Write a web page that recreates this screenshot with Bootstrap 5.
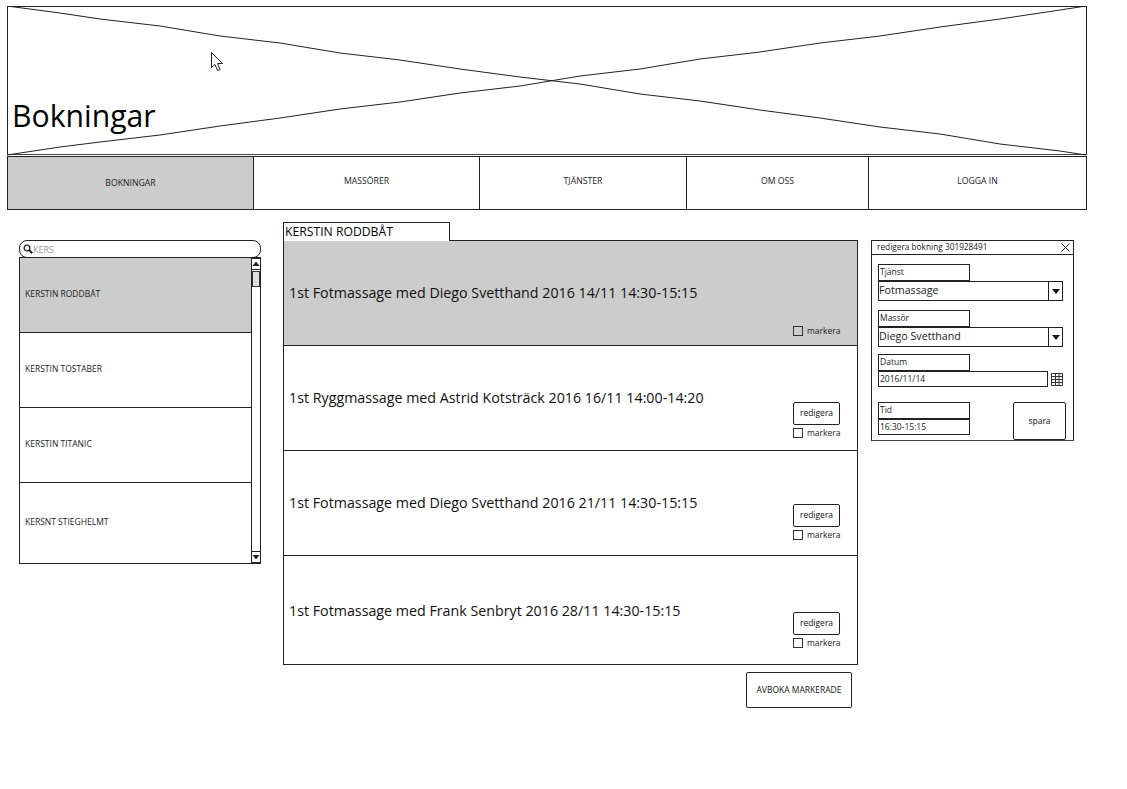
<!DOCTYPE html>
<html lang="sv">
<head>
<meta charset="utf-8">
<title>Bokningar</title>
<link href="https://cdn.jsdelivr.net/npm/bootstrap@5.3.0/dist/css/bootstrap.min.css" rel="stylesheet">
<style>
body{margin:0;background:#fff;color:#111;font-family:"Open Sans","Noto Sans",sans-serif;font-size:9px;line-height:1.2}
.wf-page{width:1127px;height:789px;padding:6px 0 0 7px;position:relative;overflow:hidden}
.wf-hero{width:1080px;height:149px;border:1px solid #222;border-bottom-color:#444;position:relative;display:flex;align-items:flex-end;padding:0 0 20px 4px}
.wf-hero svg{position:absolute;left:-1px;top:-1px}
.wf-hero h1{position:relative;margin:0;font-size:30.2px;font-weight:400;line-height:1.2;color:#000}
.wf-nav{width:1080px;height:54px;margin-top:1px;border:1px solid #222;display:flex}
.wf-nav a{display:flex;align-items:center;justify-content:center;color:#222;text-decoration:none;font-size:8.7px;border-left:1px solid #222;padding:0 0 3px}
.wf-nav a:first-child{border-left:0;background:#ccc;padding:1px 0 0}
.wf-n1{width:245px}.wf-n2{width:226px}.wf-n3{width:207px}.wf-n4{width:182px}.wf-n5{width:218px}
.wf-main{display:flex;align-items:flex-start;margin-top:12px}
.wf-left{width:242px;margin:18px 22px 0 12px}
.wf-search{height:18px;border:1px solid #222;border-radius:8px;display:flex;align-items:center;padding:0 0 0 3px;gap:0;background:#fff}
.wf-search svg{flex:none}
.wf-search input{border:0;padding:0;background:transparent;font-size:9px;color:#999;border-radius:0;height:14px;min-height:0;box-shadow:none}
.wf-people{height:307px;border:1px solid #222;margin-top:-1px;display:flex;background:#fff}
.wf-people .list-group{flex:1;border-radius:0;border-right:1px solid #222}
.wf-people .list-group-item{height:75px;display:flex;align-items:center;border:0;border-bottom:1px solid #222;border-radius:0;padding:0 0 1px 5px;font-size:8.5px;color:#222;background:transparent}
.wf-people .list-group-item:last-child{height:auto;flex:1;border-bottom:0;padding-bottom:1px}
.wf-people .list-group-item.active{background:#ccc;color:#222;padding-bottom:2px}
.wf-scroll{width:8px;display:flex;flex-direction:column;position:relative}
.wf-scroll-btn{height:12px;border:1px solid #222;display:flex;align-items:center;justify-content:center;margin:0 -1px 0 -1px}
.wf-scroll-thumb{height:16px;margin:1px 0 0 0;border:1px solid #333;background:#ddd}
.wf-mid{width:575px}
.wf-tab{width:167px;height:21px;border:1px solid #222;background:#fff;font-size:12.2px;padding:1px 0 0 1px;line-height:16px;color:#000;position:relative;margin-bottom:-3px;z-index:1}
.wf-rows{border:1px solid #222;border-radius:0;margin-top:0}
.wf-rows .list-group-item{display:flex;justify-content:space-between;border:0;border-bottom:1px solid #222;border-radius:0;height:105px;padding:0 17px 0 5px;background:#fff;color:#111}
.wf-rows .list-group-item:last-child{border-bottom:0;height:108px}
.wf-rows .list-group-item.active{background:#ccc;color:#111;margin-top:0}
.wf-row-text{align-self:center;font-size:14.25px;line-height:18px}
.wf-rows .list-group-item:last-child .wf-row-text{padding:1px 0 0}
.wf-row-tools{align-self:flex-end;display:flex;flex-direction:column;align-items:flex-start;gap:3px;width:47px}
.wf-pb1{padding-bottom:9px}
.wf-pb2{padding-bottom:12px}
.wf-pb3{padding-bottom:15px}
.wf-pb4{padding-bottom:16px}
.wf-btn{border:1px solid #222;border-radius:2px;background:#fff;color:#111;font-size:8.5px;padding:0;line-height:1}
.wf-edit{width:47px;height:23px}
.wf-check{display:flex;align-items:center;gap:4px;margin:0;font-size:8.5px;color:#222;white-space:nowrap}
.wf-check .form-check-input{width:10px;height:10px;margin:0;border:1px solid #333;border-radius:0;background-color:transparent;float:none;flex:none}
.wf-foot{display:flex;justify-content:flex-end;padding:7px 6px 0 0}
.wf-cancel{width:106px;height:36px}
.wf-edit-panel{width:203px;height:201px;margin:18px 0 0 13px;border:1px solid #222;border-bottom-color:#444;padding:0;display:flex;flex-direction:column}
.wf-title{height:14px;border-bottom:1px solid #222;display:flex;justify-content:space-between;align-items:center;padding:0 3px 1px 5px;font-size:8.3px;color:#222;flex:none}
.wf-body{padding:9px 9px 0 6px;position:relative;flex:1}
.wf-lab{display:block;width:92px;height:17px;border:1px solid #222;margin:0;font-size:8.5px;line-height:14px;padding:0 0 0 1px;color:#222}
.wf-selwrap{height:20px;margin:0 0 9px;border:1px solid #222;flex-wrap:nowrap;width:185px}
.wf-sel-last{margin-bottom:7px}
.wf-selwrap .form-select{border:0;border-radius:0;padding:0;font-size:10.7px;height:17px;background-image:none;color:#222;box-shadow:none;font-family:inherit;flex:1;min-width:0}
.wf-selwrap .input-group-text{border:0;border-left:1px solid #222;border-radius:0;background:#fff;padding:0;width:14px;flex:none;justify-content:center;position:relative;z-index:6}
.wf-date{display:flex;align-items:center;gap:3px;margin:0 0 15px}
.wf-inp{border:1px solid #222;border-radius:0;padding:0 0 1px 1px;height:16px;min-height:0;font-size:8.5px;color:#222;box-shadow:none}
.wf-date .wf-inp{width:170px;flex:none}
.wf-time{display:flex;justify-content:space-between;align-items:flex-start}
.wf-time .wf-inp{width:92px}
.wf-save{width:53px;height:38px;margin-right:-2px}
.wf-cursor{position:absolute;left:211px;top:52px}
</style>
</head>
<body>
<div class="wf-page">
  <header class="wf-hero">
    <svg width="1081" height="151" viewBox="7 6 1081 151" fill="none" stroke="#222" stroke-width="1" aria-hidden="true">
      <polyline points="7,6 60,13 100,19 160,26 220,36 280,43 340,53 400,60 460,69 520,77 580,84 640,94 700,101 760,110 820,118 880,127 940,134 1000,144 1060,151 1086,155"/>
      <polyline points="7,155 60,147 100,142 160,135 220,126 280,118 340,109 400,102 460,93 520,86 580,76 640,69 700,59 760,52 820,43 880,36 940,27 1000,19 1060,10 1086,6"/>
    </svg>
    <h1>Bokningar</h1>
  </header>
  <nav class="wf-nav">
    <a href="#" class="wf-n1">BOKNINGAR</a>
    <a href="#" class="wf-n2">MASSÖRER</a>
    <a href="#" class="wf-n3">TJÄNSTER</a>
    <a href="#" class="wf-n4">OM OSS</a>
    <a href="#" class="wf-n5">LOGGA IN</a>
  </nav>
  <main class="wf-main">
    <section class="wf-left">
      <div class="wf-search">
        <svg width="10" height="10" viewBox="0 0 10 10" fill="none" stroke="#222" aria-hidden="true"><circle cx="4" cy="4" r="2.9" stroke-width="1.3"/><path d="M6.2 6.2 9.2 9.2" stroke-width="2"/></svg>
        <input class="form-control" type="text" value="KERS" aria-label="Sök">
      </div>
      <div class="wf-people">
        <div class="list-group">
          <div class="list-group-item active">KERSTIN RODDBÅT</div>
          <div class="list-group-item">KERSTIN TOSTABER</div>
          <div class="list-group-item">KERSTIN TITANIC</div>
          <div class="list-group-item">KERSNT STIEGHELMT</div>
        </div>
        <div class="wf-scroll">
          <div class="wf-scroll-btn"><svg width="8" height="6" viewBox="0 0 8 6" aria-hidden="true"><path d="M4 0.5 7.5 5H0.5Z" fill="#222"/></svg></div>
          <div class="wf-scroll-thumb"></div>
          <div class="wf-scroll-btn mt-auto"><svg width="8" height="6" viewBox="0 0 8 6" aria-hidden="true"><path d="M4 5.5 7.5 1H0.5Z" fill="#222"/></svg></div>
        </div>
      </div>
    </section>
    <section class="wf-mid">
      <div class="wf-tab">KERSTIN RODDBÅT</div>
      <div class="list-group wf-rows">
        <div class="list-group-item active">
          <span class="wf-row-text">1st Fotmassage med Diego Svetthand 2016 14/11 14:30-15:15</span>
          <div class="wf-row-tools wf-pb1">
            <label class="wf-check"><input class="form-check-input" type="checkbox">markera</label>
          </div>
        </div>
        <div class="list-group-item">
          <span class="wf-row-text">1st Ryggmassage med Astrid Kotsträck 2016 16/11 14:00-14:20</span>
          <div class="wf-row-tools wf-pb2">
            <button class="btn wf-btn wf-edit" type="button">redigera</button>
            <label class="wf-check"><input class="form-check-input" type="checkbox">markera</label>
          </div>
        </div>
        <div class="list-group-item">
          <span class="wf-row-text">1st Fotmassage med Diego Svetthand 2016 21/11 14:30-15:15</span>
          <div class="wf-row-tools wf-pb3">
            <button class="btn wf-btn wf-edit" type="button">redigera</button>
            <label class="wf-check"><input class="form-check-input" type="checkbox">markera</label>
          </div>
        </div>
        <div class="list-group-item">
          <span class="wf-row-text">1st Fotmassage med Frank Senbryt 2016 28/11 14:30-15:15</span>
          <div class="wf-row-tools wf-pb4">
            <button class="btn wf-btn wf-edit" type="button">redigera</button>
            <label class="wf-check"><input class="form-check-input" type="checkbox">markera</label>
          </div>
        </div>
      </div>
      <div class="wf-foot"><button class="btn wf-btn wf-cancel" type="button">AVBOKA MARKERADE</button></div>
    </section>
    <aside class="wf-edit-panel">
      <div class="wf-title"><span>redigera bokning 301928491</span>
        <svg width="9" height="9" viewBox="0 0 9 9" stroke="#222" fill="none" aria-hidden="true"><path d="M0.5 0.5 8.5 8.5M8.5 0.5 0.5 8.5"/></svg>
      </div>
      <div class="wf-body">
        <label class="wf-lab">Tjänst</label>
        <div class="input-group wf-selwrap">
          <select class="form-select" aria-label="Tjänst"><option>Fotmassage</option></select>
          <span class="input-group-text"><svg width="8" height="5" viewBox="0 0 8 5" aria-hidden="true"><path d="M0 0H8L4 5Z" fill="#111"/></svg></span>
        </div>
        <label class="wf-lab">Massör</label>
        <div class="input-group wf-selwrap wf-sel-last">
          <select class="form-select" aria-label="Massör"><option>Diego Svetthand</option></select>
          <span class="input-group-text"><svg width="8" height="5" viewBox="0 0 8 5" aria-hidden="true"><path d="M0 0H8L4 5Z" fill="#111"/></svg></span>
        </div>
        <label class="wf-lab">Datum</label>
        <div class="wf-date">
          <input class="form-control wf-inp" type="text" value="2016/11/14" aria-label="Datum">
          <svg width="12" height="13" viewBox="0 0 12 13" fill="none" stroke="#333" aria-hidden="true"><path d="M0.5 0.5H11.5V12.5H0.5ZM0.5 3.5H11.5M0.5 6.5H11.5M0.5 9.5H11.5M4.5 0.5V12.5M8 0.5V12.5"/></svg>
        </div>
        <div class="wf-time">
          <div>
            <label class="wf-lab">Tid</label>
            <input class="form-control wf-inp" type="text" value="16:30-15:15" aria-label="Tid">
          </div>
          <button class="btn wf-btn wf-save" type="button">spara</button>
        </div>
      </div>
    </aside>
  </main>
  <svg class="wf-cursor" width="13" height="20" viewBox="0 0 13 20" fill="#fff" stroke="#222" aria-hidden="true"><path d="M0.5 0.5V15.5L4 12.5 6.5 18.5 9 17.5 6.5 11.5H11.5Z"/></svg>
</div>
<script src="https://cdn.jsdelivr.net/npm/bootstrap@5.3.0/dist/js/bootstrap.bundle.min.js"></script>
</body>
</html>
